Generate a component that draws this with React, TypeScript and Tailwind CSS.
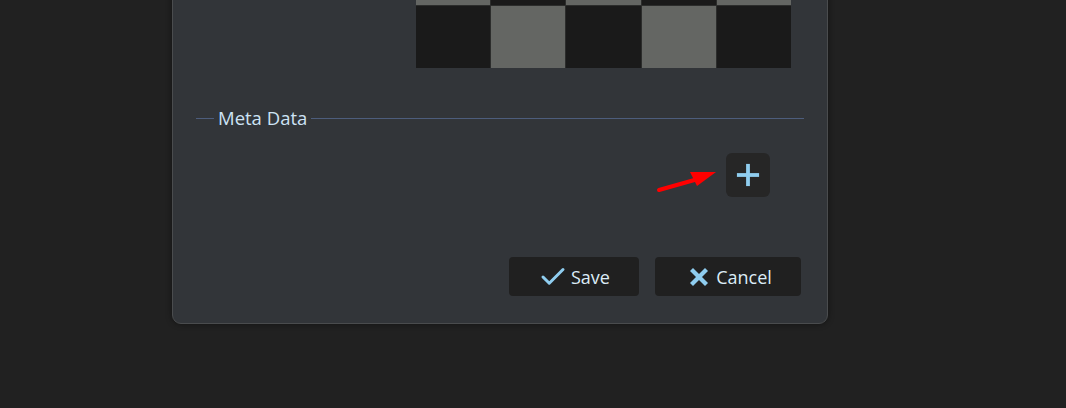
import { Check, X, Plus } from 'lucide-react'

const font = { fontFamily: '"Open Sans", "Noto Sans", sans-serif' }

const rows = [
  ['g', 'd', 'g', 'd', 'g'],
  ['d', 'g', 'd', 'g', 'd'],
]

function Checker() {
  return (
    <div className="ml-[243px] grid w-[375px] grid-cols-5 gap-px bg-[#2c2d2c]">
      {rows.flat().map((c, i) => (
        <div key={i} className={c === 'g' ? 'h-[62px] bg-[#646663]' : 'h-[62px] bg-[#1a1a1a]'} />
      ))}
    </div>
  )
}

function Arrow() {
  return (
    <svg width="64" height="24" viewBox="0 0 64 24" className="mr-[6px] mt-[16px]">
      <line x1="3" y1="21" x2="42" y2="10" stroke="#ff0000" strokeWidth="4" strokeLinecap="round" />
      <polygon points="34,3 60,3 41,17" fill="#ff0000" />
    </svg>
  )
}

export default function App() {
  return (
    <div className="h-[408px] w-[1066px] overflow-hidden bg-[#212121]" style={font}>
      <div className="ml-[172px] -mt-[81px] w-[656px] rounded-b-[9px] border border-[#4a4c4e] bg-[#323539] pt-[23px] pb-[27px] shadow-[0_0_6px_rgba(0,0,0,0.45)]">
        <Checker />

        <div className="mt-[40px] flex items-center px-[23px]">
          <div className="h-px w-[18px] bg-[#4d5d7c]" />
          <span className="px-[4px] text-[18.5px] leading-[20px] text-[#cde3f5]">Meta Data</span>
          <div className="h-px flex-1 bg-[#4d5d7c]" />
        </div>

        <div className="mt-[25px] flex items-start justify-end pr-[57px]">
          <Arrow />
          <button className="flex h-[44px] w-[44px] items-center justify-center rounded-[6px] bg-[#262626]">
            <Plus size={38} strokeWidth={2.4} color="#8fcdef" strokeLinecap="butt" />
          </button>
        </div>

        <div className="mt-[60px] flex justify-end gap-[16px] pr-[26px]">
          <button className="flex h-[39px] w-[130px] items-center justify-center gap-[3px] rounded-[4px] bg-[#202020] text-[18px] text-[#dcecf7]">
            <Check size={30} strokeWidth={2.4} color="#8fcdef" />
            <span className="mt-px">Save</span>
          </button>
          <button className="flex h-[39px] w-[146px] items-center justify-center gap-[2px] rounded-[4px] bg-[#202020] text-[18px] text-[#dcecf7]">
            <X size={30} strokeWidth={3.4} color="#8fcdef" strokeLinecap="butt" />
            <span className="mt-px">Cancel</span>
          </button>
        </div>
      </div>
    </div>
  )
}
